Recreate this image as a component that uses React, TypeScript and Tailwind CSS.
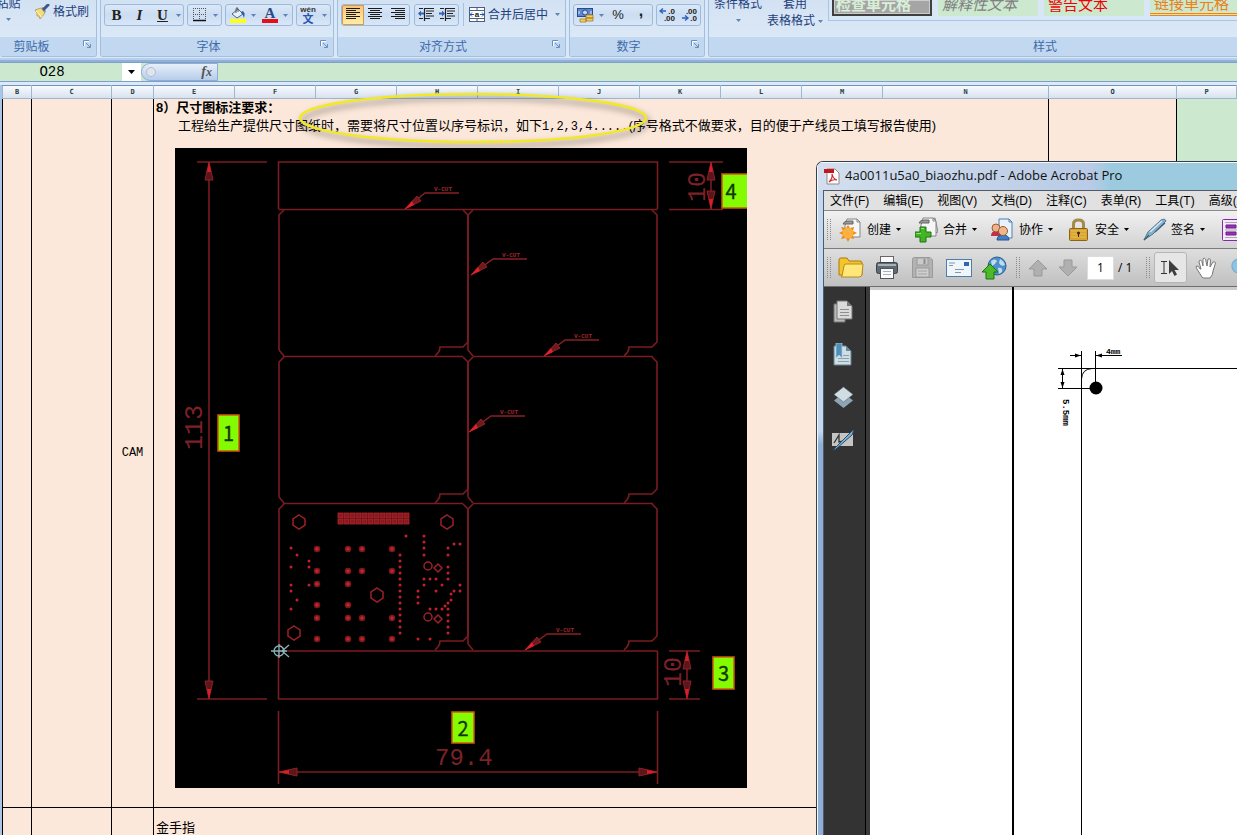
import React from "react";

const PANEL_ROWS = [208, 355, 502];
const PANEL_COLS = [
  { left: 279, right: 468 },
  { left: 468, right: 657 },
];

const V_CUTS = [
  { x: 405, y: 208, dx: 20 },
  { x: 471, y: 274, dx: 22 },
  { x: 544, y: 355, dx: 21 },
  { x: 469, y: 431, dx: 22 },
  { x: 525, y: 649, dx: 22 },
];

const PADS: [number, number[]][] = [
  [317, [548, 570, 583, 604, 617, 638]],
  [348, [548, 570, 583, 604, 617, 638]],
  [362, [548, 570, 617, 638]],
  [392, [548, 570, 617, 638]],
];

const VIAS: [number, number[]][] = [
  [291, [547, 566, 584, 590, 608]],
  [297, [554, 599]],
  [309, [560, 566, 584]],
  [400, [554, 560, 566, 572, 578, 584, 590, 596, 602, 608, 614, 620, 626, 632]],
  [406, [535]],
  [418, [590, 596, 602, 638]],
  [424, [535, 541, 547, 554, 578, 584]],
  [430, [578, 608, 638]],
  [436, [578, 590, 608]],
  [442, [584, 608]],
  [445, [605]],
  [448, [547, 554, 566, 572, 578, 602, 608, 614, 620, 626, 632]],
  [451, [593, 599]],
  [454, [543, 590]],
  [460, [543, 584, 590]],
];

const HOLES = [
  [299, 521],
  [447, 521],
  [377, 594],
  [294, 632],
];

const BADGES = [
  { n: "1", x: 218, y: 414, w: 21, h: 36 },
  { n: "2", x: 452, y: 711, w: 22, h: 31 },
  { n: "3", x: 713, y: 656, w: 21, h: 32 },
  { n: "4", x: 722, y: 173, w: 26, h: 34 },
];

const COLUMNS = [
  { name: "B", width: "w-[29px]" },
  { name: "C", width: "w-[80px]" },
  { name: "D", width: "w-[42px]" },
  { name: "E", width: "w-[81px]" },
  { name: "F", width: "w-[81px]" },
  { name: "G", width: "w-[81px]" },
  { name: "H", width: "w-[81px]" },
  { name: "I", width: "w-[81px]" },
  { name: "J", width: "w-[81px]" },
  { name: "K", width: "w-[81px]" },
  { name: "L", width: "w-[81px]" },
  { name: "M", width: "w-[81px]" },
  { name: "N", width: "w-[166px]" },
  { name: "O", width: "w-[128px]" },
  { name: "P", width: "w-auto" },
];

const MENUS = ["文件(F)", "编辑(E)", "视图(V)", "文档(D)", "注释(C)", "表单(R)", "工具(T)", "高级(A)"];

/* ---------- 通用小部件 ---------- */

function Caret({ className = "text-[#5f83b5]" }: { className?: string }) {
  return (
    <svg width="5" height="3" viewBox="0 0 5 3" className={`shrink-0 ${className}`}>
      <path d="M0 0H5L2.5 3Z" fill="currentColor" />
    </svg>
  );
}

function ToolBox({ children, className = "" }: { children: React.ReactNode; className?: string }) {
  return (
    <div className={`flex h-[22px] shrink-0 items-stretch rounded-[3px] border border-[#9cb9de] bg-linear-to-b from-[#dbe8f7] via-[#cbddf2] to-[#d9e6f6] ${className}`}>
      {children}
    </div>
  );
}

function Tool({ label, children, className = "w-[23px]" }: { label: string; children?: React.ReactNode; className?: string }) {
  return (
    <button aria-label={label} className={`flex items-center justify-center ${className}`}>
      {children}
    </button>
  );
}

function Group({ title, children, className, labelClass = "", launcher = true }: { title: string; children: React.ReactNode; className: string; labelClass?: string; launcher?: boolean }) {
  return (
    <section className={`flex flex-col overflow-hidden rounded-b-[3px] border-x border-b border-[#a3bfdf] ${className}`}>
      <div className="flex h-[37px] items-start bg-linear-to-b from-[#d3e2f3] to-[#dbe8f6]">{children}</div>
      <div className="flex h-[19px] items-center bg-[#c1d8f0] text-xs text-[#3e6aaa]">
        <span className={`flex-1 text-center ${labelClass}`}>{title}</span>
        {launcher && (
          <button aria-label={`${title}选项`} className="mr-[5px] mb-[5px] ml-1">
            <svg width="8" height="8" viewBox="0 0 8 8">
              <path d="M0.5 6V0.5H6" fill="none" stroke="#6c8ebf" />
              <path d="M3 3L7 7M7.5 4V7.5H4" fill="none" stroke="#6c8ebf" />
              <path d="M1.5 6V1.5H6" fill="none" stroke="#fff" />
            </svg>
          </button>
        )}
      </div>
    </section>
  );
}

function Lines({ rows, className = "" }: { rows: number[][]; className?: string }) {
  return (
    <svg width="16" height="13" viewBox="0 0 16 13" className={className}>
      {rows.map(([x, w], i) => (
        <rect key={i} x={x} y={i * 2} width={w} height="1" fill="#1b1b1b" />
      ))}
    </svg>
  );
}

/* ---------- Excel 功能区 ---------- */

function Ribbon() {
  return (
    <header className="flex h-[62px] shrink-0 gap-[3px] border-b-2 border-[#8fb0d9] bg-[#d9e7f8] pb-[3px] shadow-[inset_0_-2px_0_#b9d0ec]">
      <Group title="剪贴板" className="w-[97px] shrink-0 border-l-0" labelClass="pr-4">
        <button className="-mt-[4px] -ml-[4px] flex w-[25px] flex-col items-center gap-[6px] text-xs text-[#1e3f7d]">
          <span className="whitespace-nowrap">粘贴</span>
          <Caret />
        </button>
        <button className="mt-[4px] ml-[13px] flex items-center gap-[3px] text-xs text-[#1e3f7d]">
          <svg width="16" height="16" viewBox="0 0 16 16">
            <path d="M1 6L7 4L11 9L6 15L5 12L3 12L3 9Z" fill="#f4dc7c" stroke="#b08a34" strokeWidth="0.7" />
            <path d="M3 8L8 13M2 7L6 11" stroke="#fff5bf" />
            <path d="M7 4L11 9L12 7L9 3Z" fill="#8a93a8" />
            <path d="M10 5L14 1" stroke="#3e5788" strokeWidth="3" strokeLinecap="round" />
          </svg>
          格式刷
        </button>
      </Group>

      <Group title="字体" className="w-[234px] shrink-0">
        <div className="mt-[4px] ml-[3px] flex gap-[3px] font-['Liberation_Serif',serif] text-[15px] font-bold text-[#222]">
          <ToolBox className="w-[80px]">
            <Tool label="加粗">B</Tool>
            <Tool label="倾斜"><i>I</i></Tool>
            <Tool label="下划线"><u>U</u></Tool>
            <Tool label="下划线类型" className="w-[9px]"><Caret /></Tool>
          </ToolBox>
          <ToolBox className="w-[35px]">
            <Tool label="边框">
              <svg width="14" height="14" viewBox="0 0 14 14">
                <path d="M0.5 0V12M6.5 0V12M12.5 0V12M0 0.5H13M0 6.5H13" stroke="#555" strokeDasharray="1 1" />
                <path d="M0 12.5H13" stroke="#111" strokeWidth="1.5" />
              </svg>
            </Tool>
            <Tool label="边框类型" className="w-[9px]"><Caret /></Tool>
          </ToolBox>
          <ToolBox className="w-[68px]">
            <Tool label="填充颜色">
              <svg width="16" height="16" viewBox="0 0 16 16">
                <path d="M2 7L8 2L13 7L7 11Z" fill="#e9f0fa" stroke="#48658f" />
                <path d="M6 6V2Q7 -1 8 2V5" fill="none" stroke="#555" />
                <path d="M12 4Q16 5 14 11Q13 7 11 6Z" fill="#2e5cab" />
                <rect y="12" width="16" height="4" fill="#ffff14" />
              </svg>
            </Tool>
            <Tool label="更多填充" className="w-[9px]"><Caret /></Tool>
            <Tool label="字体颜色">
              <svg width="16" height="16" viewBox="0 0 16 16" className="overflow-visible">
                <text x="8" y="11" textAnchor="middle" fontSize="15" fontWeight="bold" fill="#2b4a86">A</text>
                <rect y="12" width="16" height="4" fill="#e3101a" />
              </svg>
            </Tool>
            <Tool label="更多字体颜色" className="w-[9px]"><Caret /></Tool>
          </ToolBox>
          <ToolBox className="w-[35px]">
            <Tool label="拼音指南">
              <svg width="17" height="18" viewBox="0 0 17 18" className="overflow-visible" fontFamily="'Liberation Sans','Noto Sans CJK SC',sans-serif">
                <text x="8" y="6" textAnchor="middle" fontSize="8" fontWeight="bold" fill="#333">wén</text>
                <text x="8" y="17" textAnchor="middle" fontSize="11" fontWeight="bold" fill="#2a55b0">文</text>
              </svg>
            </Tool>
            <Tool label="拼音选项" className="w-[9px]"><Caret /></Tool>
          </ToolBox>
        </div>
      </Group>

      <Group title="对齐方式" className="w-[229px] shrink-0">
        <div className="mt-[3px] ml-[3px] flex items-center gap-[4px]">
          <ToolBox className="w-[69px]">
            <button aria-label="左对齐" className="flex w-[23px] items-center justify-center rounded-l-[2px] bg-linear-to-b from-[#f9c07a] via-[#fddb92] to-[#ffeea2] shadow-[inset_0_0_0_1px_#d39a52]">
              <Lines rows={[[1, 14], [1, 10], [1, 14], [1, 10], [1, 14], [1, 10]]} />
            </button>
            <Tool label="居中"><Lines rows={[[1, 14], [3, 10], [1, 14], [3, 10], [1, 14], [3, 10]]} /></Tool>
            <Tool label="右对齐"><Lines rows={[[1, 14], [5, 10], [1, 14], [5, 10], [1, 14], [5, 10]]} /></Tool>
          </ToolBox>
          <ToolBox className="w-[45px]">
            {["减少缩进量", "增加缩进量"].map((label, i) => (
              <Tool key={label} label={label} className="w-[22px]">
                <svg width="16" height="13" viewBox="0 0 16 13">
                  <path d="M1 0.5H5M7 0.5H16M8 3H16M8 5.5H14M8 8H16M7 10.5H12M1 10.5H5M6.5 0V13" stroke="#222" strokeWidth="1.2" />
                  <path d={i === 0 ? "M0 5.5L3 2.5V4.5H6V6.5H3V8.5Z" : "M6 5.5L3 2.5V4.5H0V6.5H3V8.5Z"} fill="#2f62b8" />
                </svg>
              </Tool>
            ))}
          </ToolBox>
          <div className="h-[23px] w-px bg-[#a9c2e0]" />
          <button className="ml-px flex items-center gap-[3px] text-xs text-[#1e3f7d]">
            <svg width="16" height="15" viewBox="0 0 16 15">
              <rect x="0.5" y="0.5" width="15" height="14" fill="#fff" stroke="#4b5f80" />
              <path d="M0 3.5H16M0 11.5H16M8 0V3M8 12V15" stroke="#4b5f80" />
              <path d="M1 7.5H5M3 5.5L1 7.5L3 9.5M15 7.5H11M13 5.5L15 7.5L13 9.5" fill="none" stroke="#2352a5" />
              <text x="8" y="10" textAnchor="middle" fontSize="8" fontWeight="bold" fill="#222">a</text>
            </svg>
            合并后居中
            <Caret className="ml-[4px] text-[#5f83b5]" />
          </button>
        </div>
      </Group>

      <Group title="数字" className="w-[136px] shrink-0">
        <div className="mt-[4px] ml-[3px] flex gap-[3px] text-[13px] text-[#222]">
          <ToolBox className="w-[80px]">
            <Tool label="会计数字格式">
              <svg width="17" height="17" viewBox="0 0 17 17">
                <rect x="0.5" y="1.5" width="15" height="8" fill="#5d86cd" stroke="#27498e" />
                <circle cx="8" cy="5.5" r="2.5" fill="#c4d8f6" stroke="#27498e" />
                <path d="M2 4V7M14 4V7" stroke="#dbe8fb" />
                <path d="M9 8H16V11H9ZM9 11H16V14H9ZM3 12H9V15H3Z" fill="#f6cf5b" stroke="#9c711c" strokeWidth="0.7" />
              </svg>
            </Tool>
            <Tool label="货币选项" className="w-[9px]"><Caret /></Tool>
            <Tool label="百分比样式" className="w-[24px]">%</Tool>
            <Tool label="千位分隔样式" className="w-[22px]"><b className="-mt-2 text-base">,</b></Tool>
          </ToolBox>
          <ToolBox className="w-[45px]">
            {["增加小数位数", "减少小数位数"].map((label, i) => (
              <Tool key={label} label={label} className="w-[22px]">
                <svg width="17" height="16" viewBox="0 0 17 16" fontSize="8" fontWeight="bold" fill="#222">
                  <text x="16" y="7" textAnchor="end">{i === 0 ? ".0" : ".00"}</text>
                  <text x="16" y="14" textAnchor="end">{i === 0 ? ".00" : ".0"}</text>
                  <path d={i === 0 ? "M1 4H7M4 1.5L1 4L4 6.5" : "M1 11H7M4 8.5L7 11L4 13.5"} fill="none" stroke="#2f62b8" strokeWidth="1.4" />
                </svg>
              </Tool>
            ))}
          </ToolBox>
        </div>
      </Group>

      <Group title="样式" className="min-w-0 flex-1 rounded-br-none border-r-0" labelClass="pl-36" launcher={false}>
        <div className="flex w-full min-w-0 whitespace-nowrap text-[#1e3f7d]">
          <button className="-mt-[4px] ml-[5px] flex w-12 shrink-0 flex-col items-center gap-[7px] text-xs">
            条件格式
            <Caret />
          </button>
          <button className="-mt-[4px] ml-[5px] flex w-[56px] shrink-0 flex-col text-xs leading-[17px]">
            <span>套用</span>
            <span className="flex items-center gap-[3px]">
              表格格式
              <Caret />
            </span>
          </button>
          <div className="ml-[5px] flex h-[21px] min-w-0 flex-1 gap-[6px] overflow-hidden border-b border-l border-[#a9c4e4] bg-[#d9e6f5] pl-[3px] text-[15px] leading-[18px]">
            <button className="h-[16px] w-[100px] shrink-0 overflow-hidden border-2 border-t-0 border-[#3f3f3f] bg-[#a5a5a5] text-left text-[#d8f0d8] shadow-[inset_0_0_0_1px_#ccc]"><div className="-mt-[5px] pl-[2px] font-bold">检查单元格</div></button>
            <button className="h-[16px] w-[100px] shrink-0 overflow-hidden bg-[#cce8cf] text-left text-[#7f7f7f] italic"><div className="-mt-[6px] pl-[4px]">解释性文本</div></button>
            <button className="h-[16px] w-[100px] shrink-0 overflow-hidden bg-[#cce8cf] text-left text-[#f00000]"><div className="-mt-[6px] pl-[4px]">警告文本</div></button>
            <button className="h-[16px] w-[100px] shrink-0 overflow-hidden border-b-3 border-double border-[#ff8001] bg-[#cce8cf] text-left text-[#e8811a]"><div className="-mt-[6px] pl-[4px]">链接单元格</div></button>
          </div>
        </div>
      </Group>
    </header>
  );
}

function FormulaBar() {
  return (
    <div className="flex h-[20px] shrink-0 border-y border-[#7f9fc8] bg-[#cce8cf]">
      <input aria-label="名称框" defaultValue="O28" className="w-[122px] shrink-0 bg-[#cce8cf] pr-[18px] text-center font-['Liberation_Mono',monospace] text-sm text-black outline-none" />
      <button aria-label="名称列表" className="flex w-[19px] shrink-0 items-center justify-center bg-white">
        <svg width="7" height="4" viewBox="0 0 7 4"><path d="M0 0H7L3.5 4Z" /></svg>
      </button>
      <div className="flex w-[77px] shrink-0 items-center justify-between rounded-l-full border-y border-r border-l border-[#8fadd3] bg-linear-to-b from-[#e6eff9] to-[#b6cdea] pr-[5px] pl-[4px]">
        <span className="size-[10px] rounded-full border border-[#b3bdcb] bg-[#dfe5ee]" />
        <button aria-label="插入函数" className="font-['Liberation_Serif',serif] text-sm leading-none font-bold text-[#555] italic">
          f<span className="text-xs">x</span>
        </button>
      </div>
      <input aria-label="编辑栏" className="min-w-0 flex-1 bg-[#cce8cf] outline-none" />
    </div>
  );
}

/* ---------- 拼板尺寸图 ---------- */

function Arrow({ x, y, turn }: { x: number; y: number; turn: number }) {
  return (
    <g transform={`translate(${x} ${y}) rotate(${turn})`}>
      <path d="M0 0L-4 18H4Z" fill="#5b161b" stroke="#8f2026" strokeWidth="1" />
      <path d="M0 0L-2 10H2Z" fill="#d81f28" />
    </g>
  );
}

function PanelDrawing() {
  return (
    <svg viewBox="175 147 572 640" className="block h-[640px] w-[572px] bg-black" role="img" aria-label="拼板尺寸图">
      <g fill="none" stroke="#7a1c22" strokeWidth="1.6">
        <path d="M278.5 208V161H657.5V208M278.5 650V698H657.5V650" />
        <path d="M278.5 208.5H657.5M283 355.5H463M473 355.5H653M283 502.5H463M473 502.5H653M278.5 650H657.5" />
        {PANEL_ROWS.map((top) =>
          PANEL_COLS.map(({ left, right }) => (
            <path
              key={`${top}-${left}`}
              d={`M${left} ${top + 141}V${top + 6}L${left + 5} ${top + 1}M${right - 5} ${top + 1}L${right} ${top + 6}V${top + 133}L${right - 5} ${top + 138}H${right - 28}Q${right - 28} ${top + 143} ${right - 33} ${top + 147}M${left} ${top + 141}L${left + 5} ${top + 147}`}
            />
          ))
        )}
        {/* 尺寸界线 */}
        <path d="M197 161H267M197 698H267M209 161V698" />
        <path d="M278.5 710V783M657.5 710V783M279 771H657" />
        <path d="M669 161H723M669 208.5H723M711 161V208" />
        <path d="M669 650H700M669 698H700M687 650V698" />
      </g>

      <Arrow x={209} y={161} turn={0} />
      <Arrow x={209} y={698} turn={180} />
      <Arrow x={711} y={161} turn={0} />
      <Arrow x={711} y={208} turn={180} />
      <Arrow x={687} y={650} turn={0} />
      <Arrow x={687} y={698} turn={180} />
      <Arrow x={279} y={771} turn={-90} />
      <Arrow x={657} y={771} turn={90} />

      {V_CUTS.map(({ x, y, dx }) => (
        <g key={`${x}-${y}`}>
          <path d={`M${x} ${y}L${x + dx} ${y - 16}H${x + dx + 34}`} fill="none" stroke="#8a2026" strokeWidth="1.4" />
          <path d={`M${x} ${y}L${x + 12} ${y - 13}L${x + 16} ${y - 8}Z`} fill="#6d191e" stroke="#a3242b" strokeWidth="0.8" />
          <path d={`M${x} ${y}L${x + 7} ${y - 8}L${x + 9} ${y - 4}Z`} fill="#e0222b" />
          <text x={x + dx + 9} y={y - 18} fontSize="6" fontWeight="bold" fill="#a0282e" fontFamily="'Liberation Mono',monospace">V-CUT</text>
        </g>
      ))}

      {/* 元件孔位 */}
      {Array.from({ length: 24 }, (_, i) => (
        <rect key={i} x={338 + (i % 12) * 6} y={i < 12 ? 512 : 518} width="5" height="5" fill="#8a1a20" stroke="#b3262d" strokeWidth="0.8" />
      ))}
      {PADS.map(([x, ys]) => ys.map((y) => <circle key={`${x}-${y}`} cx={x} cy={y} r="2.5" fill="#c7232b" stroke="#78181d" strokeWidth="1.5" />))}
      {VIAS.map(([x, ys]) => ys.map((y) => <circle key={`${x}-${y}`} cx={x} cy={y} r="1.5" fill="#c4202a" />))}
      <g fill="none" stroke="#9a2228" strokeWidth="1.5">
        {HOLES.map(([x, y]) => (
          <path key={`${x}-${y}`} d={`M${x} ${y - 7}L${x + 6} ${y - 3}V${y + 3}L${x} ${y + 7}L${x - 6} ${y + 3}V${y - 3}Z`} />
        ))}
        <circle cx="428" cy="565" r="4" />
        <circle cx="428" cy="616" r="4" />
        <path d="M438 563L442 567L438 571L434 567ZM438 614L442 618L438 622L434 618Z" />
      </g>

      {/* 原点 */}
      <g fill="none" stroke="#87b5b8" strokeWidth="1.3">
        <circle cx="279" cy="650" r="5" />
        <path d="M271 650H287M279 643V657M282 650L289 644M282 650L289 656" />
      </g>

      <g fill="#7d2127" fontFamily="'Liberation Mono',monospace" fontSize="25">
        <text transform="translate(202 449) rotate(-90)">113</text>
        <text x="435" y="764" fontSize="24">79.4</text>
        <text transform="translate(705 201) rotate(-90)">10</text>
        <text transform="translate(681 686) rotate(-90)">10</text>
      </g>

      {BADGES.map(({ n, x, y, w, h }) => (
        <g key={n}>
          <rect x={x} y={y} width={w} height={h} fill="#84fb00" stroke="#d05a10" strokeWidth="1.5" />
          <text x={n === "4" ? 731 : x + w / 2} y={y + h / 2 + 8} textAnchor="middle" fontSize="20" fill="#12350a" stroke="#12350a" strokeWidth="0.3" fontFamily="'Noto Sans CJK SC',sans-serif">{n}</text>
        </g>
      ))}
    </svg>
  );
}

function Sheet() {
  return (
    <div className="min-h-0 flex-1 overflow-hidden border-l-2 border-[#a9c6e8] bg-[#fce8da]">
      <table className="w-full table-fixed border-collapse text-[13px] text-black">
        <colgroup>
          {COLUMNS.map(({ name, width }) => <col key={name} className={width} />)}
        </colgroup>
        <thead>
          <tr className="h-[13px] bg-linear-to-b from-[#f8fafd] to-[#d5e0ee] font-['DejaVu_Sans_Mono',monospace] text-[7px] leading-[12px]">
            {COLUMNS.map(({ name }) => (
              <th key={name} scope="col" className="border border-t-[#6f93c1] border-r-[#9eb6ce] border-b-[#9eb6ce] border-l-[#9eb6ce] p-0 font-bold text-[#27413e]">{name}</th>
            ))}
          </tr>
        </thead>
        <tbody>
          <tr>
            <td className="border-x border-b border-black" />
            <td className="border-x border-b border-black" />
            <td className="border-x border-b border-black p-0 text-center font-['Liberation_Mono',monospace] text-xs">CAM</td>
            <td colSpan={10} className="relative border-x border-b border-black p-0 align-top">
              <p className="pl-[2px] leading-[18px] font-bold">8）尺寸图标注要求：</p>
              <p className="pl-6 leading-[17px] whitespace-nowrap">
                工程给生产提供尺寸图纸时，需要将尺寸位置以序号标识，如下
                <span className="font-['Liberation_Mono',monospace] text-xs">1,2,3,4.....</span>
                (序号格式不做要求，目的便于产线员工填写报告使用)
              </p>
              <div className="mt-[13px] mb-[19px] ml-[21px]">
                <PanelDrawing />
              </div>
              <svg className="pointer-events-none absolute -top-2 left-[144px] drop-shadow-[2px_4px_3px_rgba(0,0,0,0.5)]" width="352" height="54" viewBox="0 0 352 54">
                <ellipse cx="175" cy="27" rx="173" ry="24" fill="none" stroke="#f2e926" strokeWidth="2.5" />
              </svg>
            </td>
            <td className="border-x border-b border-black" />
            <td className="border-l border-black bg-[#cce8cf]" />
          </tr>
          <tr className="h-10">
            <td className="border-x border-black" />
            <td className="border-x border-black" />
            <td className="border-x border-black" />
            <td colSpan={10} className="border-x border-black px-[2px] py-0">金手指</td>
            <td className="border-x border-black" />
            <td className="bg-[#cce8cf]" />
          </tr>
        </tbody>
      </table>
    </div>
  );
}

/* ---------- Acrobat 窗口 ---------- */

function PageShape() {
  return (
    <>
      <path d="M8 1H18L21 4V19H6V8Z" fill="#f6f6f6" stroke="#858585" />
      <path d="M18 1V4H21" fill="none" stroke="#858585" />
      <path d="M4 6Q5 3 9 3H14V6H4Z" fill="#9a9a9a" stroke="#666" />
    </>
  );
}

function CreateIcon() {
  return (
    <svg width="23" height="24" viewBox="0 0 23 24">
      <PageShape />
      <path d="M9 7L11 10L15 9L14 13L18 15L14 17L15 21L11 20L9 24L7 20L2 21L4 17L0 15L4 13L2 9L7 10Z" fill="#e78b1c" />
      <circle cx="9" cy="15" r="5.5" fill="#fcb040" />
    </svg>
  );
}

function MergeIcon() {
  return (
    <svg width="23" height="26" viewBox="0 0 23 26">
      <path d="M6 4L20 1L23 15L12 19Z" fill="#dedede" stroke="#888" />
      <PageShape />
      <path d="M5 10H11V15H16V20H11V25H5V20H0V15H5Z" fill="#43b525" stroke="#1c7410" />
      <path d="M6 11.5H9M1.5 16.5H6" stroke="#9be37f" />
    </svg>
  );
}

function ShareIcon() {
  return (
    <svg width="22" height="24" viewBox="0 0 22 24">
      <path d="M8 1H18L21 4V20H8Z" fill="#eaf3fc" stroke="#4e7fb2" />
      <path d="M18 1V4H21" fill="none" stroke="#4e7fb2" />
      <path d="M0 18Q0 13 5 13Q10 13 10 18Z" fill="#c22f4e" />
      <circle cx="5" cy="10" r="4" fill="#eab487" stroke="#9a5a35" />
      <path d="M6 22Q6 17 12 17Q18 17 18 22Z" fill="#3e7fc4" stroke="#24558e" />
      <circle cx="12" cy="13" r="4.5" fill="#edb78b" stroke="#9a5a35" />
    </svg>
  );
}

function LockIcon() {
  return (
    <svg width="19" height="23" viewBox="0 0 19 23" className="ml-[2px]">
      <path d="M4.5 11V6Q4.5 2 9.5 2Q14.5 2 14.5 6V11" fill="none" stroke="#a58a4a" strokeWidth="3" />
      <rect x="0.5" y="10.5" width="18" height="12" rx="1" fill="#d9a32f" stroke="#8a6416" />
      <path d="M2 13H17M2 16H17M2 19H17" stroke="#edc767" strokeWidth="0.8" />
      <circle cx="9.5" cy="15" r="1.5" fill="#3b2a08" />
      <path d="M9.5 15V19" stroke="#3b2a08" />
    </svg>
  );
}

function PenIcon() {
  return (
    <svg width="24" height="24" viewBox="0 0 24 24">
      <path d="M1 22L5 14L18 2Q22 0 23 3L10 16Z" fill="#83afcb" stroke="#54788f" />
      <path d="M7 14L19 3" stroke="#d4e8f5" strokeWidth="1.5" />
      <path d="M12 14L22 5M1 22L6 17" stroke="#425f73" strokeWidth="1.2" />
    </svg>
  );
}

const TASKS = [
  { name: "创建", icon: <CreateIcon /> },
  { name: "合并", icon: <MergeIcon /> },
  { name: "协作", icon: <ShareIcon /> },
  { name: "安全", icon: <LockIcon /> },
  { name: "签名", icon: <PenIcon /> },
];

function Grip() {
  return (
    <svg width="4" height="22" viewBox="0 0 4 22" className="shrink-0">
      <path d="M0.5 0V22M3.5 0V22" stroke="#8b8b8b" strokeDasharray="1 1" />
    </svg>
  );
}

function TaskBar() {
  return (
    <div className="flex h-[38px] shrink-0 items-center overflow-hidden border-b border-[#7b7b7b] bg-linear-to-b from-[#f1f1f1] to-[#d2d2d2] pl-[3px]">
      <Grip />
      <div className="ml-2 flex">
        {TASKS.map(({ name, icon }) => (
          <button key={name} className="flex w-[76px] shrink-0 items-center text-xs text-black">
            <span className="flex w-[28px] shrink-0 justify-start">{icon}</span>
            {name}
            <Caret className="ml-[5px] text-black" />
          </button>
        ))}
        <button aria-label="表单" className="flex shrink-0 items-center pl-[3px]">
          <svg width="24" height="22" viewBox="0 0 24 22">
            <rect x="0.5" y="0.5" width="23" height="21" rx="1" fill="#f4e8fa" stroke="#8428a3" />
            <path d="M3 3.5H22M3 11H22M3 18.5H22" stroke="#aaa" />
            <path d="M4 6H14V9H4ZM4 13H14V16H4Z" fill="#9337b3" stroke="#6d1b8c" />
          </svg>
        </button>
      </div>
    </div>
  );
}

function ViewBar() {
  return (
    <div className="flex h-[38px] shrink-0 items-center overflow-hidden border-b border-[#6e6e6e] bg-linear-to-b from-[#dedede] to-[#c0c0c0] pl-[3px]">
      <Grip />
      <button aria-label="打开" className="ml-[7px] shrink-0">
        <svg width="26" height="21" viewBox="0 0 26 21">
          <path d="M1 18V3Q1 1 3 1H9L11 4H22Q24 4 24 6V18Z" fill="#f3c52c" stroke="#a97b0c" />
          <path d="M4 19L6 9Q6 7 8 7H25L24 17Q24 20 21 20H3Z" fill="#ffe77a" stroke="#b98c17" />
        </svg>
      </button>
      <button aria-label="打印" className="ml-[12px] shrink-0">
        <svg width="22" height="23" viewBox="0 0 22 23">
          <rect x="4.5" y="0.5" width="13" height="7" fill="#fafafa" stroke="#666" />
          <rect x="0.5" y="6.5" width="21" height="11" rx="2" fill="#606a72" stroke="#3c4449" />
          <path d="M2 9H20" stroke="#a6b2ba" strokeWidth="2" />
          <rect x="4.5" y="12.5" width="13" height="10" fill="#fafafa" stroke="#555" />
          <path d="M7 15.5H15M7 18.5H15" stroke="#9bb5cc" />
        </svg>
      </button>
      <button aria-label="保存" disabled className="ml-[14px] shrink-0">
        <svg width="21" height="21" viewBox="0 0 21 21">
          <path d="M0.5 2.5Q0.5 0.5 2.5 0.5H18L20.5 3V20.5H0.5Z" fill="#b2b2b2" stroke="#9a9a9a" />
          <rect x="5" y="1" width="11" height="7" fill="#cacaca" stroke="#9a9a9a" />
          <path d="M12.5 2V7" stroke="#8e8e8e" strokeWidth="2" />
          <rect x="4" y="11" width="13" height="9" fill="#cfcfcf" stroke="#9a9a9a" />
          <path d="M6 14H15M6 17H15" stroke="#a3a3a3" />
        </svg>
      </button>
      <button aria-label="电子邮件" className="ml-[13px] shrink-0">
        <svg width="26" height="18" viewBox="0 0 26 18">
          <rect x="0.5" y="0.5" width="25" height="17" fill="#eff6fb" stroke="#4b7eac" />
          <rect x="18" y="3" width="5" height="4" fill="#2f68aa" />
          <path d="M3 4H9M3 6.5H7M9 10.5H18M9 13.5H15" stroke="#8398aa" />
        </svg>
      </button>
      <button aria-label="上传" className="ml-[10px] shrink-0">
        <svg width="25" height="24" viewBox="0 0 25 24">
          <circle cx="15" cy="10" r="9" fill="#4f8fca" stroke="#2a5f94" />
          <path d="M9 5Q13 2 15 5Q13 9 10 10ZM18 3Q22 5 23 9Q19 11 17 7ZM16 12Q21 11 20 16L17 18Z" fill="#bfdcf0" />
          <path d="M8 8L16 16H12V23H4V16H0Z" fill="#4cba28" stroke="#1c7410" />
        </svg>
      </button>
      <span className="ml-[9px] flex"><Grip /></span>
      {["上一页", "下一页"].map((label, i) => (
        <button key={label} aria-label={label} disabled className={i === 0 ? "ml-[8px] shrink-0" : "ml-[10px] shrink-0"}>
          <svg width="20" height="18" viewBox="0 0 20 18">
            <path d={i === 0 ? "M10 1L19 10H14V17H6V10H1Z" : "M10 17L19 8H14V1H6V8H1Z"} fill="#b0b0b0" stroke="#999" />
          </svg>
        </button>
      ))}
      <label className="ml-[9px] flex shrink-0 items-center gap-[4px] font-['Open_Sans',sans-serif] text-xs text-black">
        <input aria-label="页码" defaultValue="1" className="h-6 w-[27px] border border-[#ddd] bg-white text-center outline-none" />
        / 1
      </label>
      <span className="ml-[14px] flex"><Grip /></span>
      <button aria-label="选择工具" className="ml-[4px] flex h-[31px] w-[33px] shrink-0 items-center justify-center rounded-[3px] border border-[#b5b5b5] bg-[#e6e6e6]">
        <svg width="19" height="17" viewBox="0 0 19 17">
          <path d="M0 2.5H6M0 14.5H6M3 2.5V14.5" stroke="#333" />
          <path d="M8 1V15L11 12L13.5 17L16 15.5L13.5 11H18Z" fill="#3d3d3d" />
        </svg>
      </button>
      <button aria-label="手形工具" className="ml-[8px] shrink-0">
        <svg width="22" height="22" viewBox="0 0 22 22">
          <path d="M7 20L2 12Q0 9 2 9Q4 9 5 12L6 12L4 5Q4 3 5.5 3Q7 3 8 9L8 2Q9 0 10.5 2L12 9L13 2Q15 1 15.5 3L15 10L18 5Q20 4 20.5 6L18 14Q18 18 15 21H8Z" fill="#fff" stroke="#777" />
        </svg>
      </button>
      <button aria-label="放大" className="ml-[14px] shrink-0">
        <svg width="16" height="20" viewBox="0 0 16 20"><circle cx="8" cy="8" r="7" fill="#8cc4e6" stroke="#7fb0d0" strokeWidth="1.5" /></svg>
      </button>
    </div>
  );
}

function NavPane() {
  return (
    <nav className="flex w-[41px] shrink-0 flex-col items-center gap-[20px] bg-[#333] pt-[13px] pr-[3px]">
      <button aria-label="页面">
        <svg width="20" height="23" viewBox="0 0 20 23">
          <path d="M1 4H12V22H1Z" fill="#b9b9b9" stroke="#777" />
          <path d="M4 1H14L19 6V19H4Z" fill="#dadada" stroke="#777" />
          <path d="M14 1V6H19Z" fill="#777" />
          <path d="M7 9.5H16M7 12.5H16M7 15.5H16" stroke="#8e8e8e" />
        </svg>
      </button>
      <button aria-label="书签">
        <svg width="20" height="23" viewBox="0 0 20 23">
          <path d="M1 3H13L18 8V22H1Z" fill="#cfdde4" stroke="#67808e" />
          <path d="M13 3V8H18Z" fill="#6b8798" />
          <path d="M10 12.5H16M5 15.5H16M5 18.5H16" stroke="#8ba1ad" />
          <path d="M3 0H9V15L6 12L3 15Z" fill="#4f8fb5" stroke="#a7cfe6" strokeWidth="0.7" />
        </svg>
      </button>
      <button aria-label="图层">
        <svg width="21" height="23" viewBox="0 0 21 23">
          <path d="M10.5 7L20 14.5L10.5 22L1 14.5Z" fill="#8fa5b3" />
          <path d="M10.5 1L20 8.5L10.5 16L1 8.5Z" fill="#d2dde3" stroke="#5d6f7a" strokeWidth="0.6" />
        </svg>
      </button>
      <button aria-label="签名">
        <svg width="24" height="22" viewBox="0 0 24 22">
          <rect x="1" y="4" width="21" height="13" fill="#c4c4c4" />
          <path d="M3 14L8 6L8 13L13 12" fill="none" stroke="#333" strokeWidth="1.3" />
          <path d="M2 21L21 2L23 1L21 6L5 20Z" fill="#7cb0d2" stroke="#2b4f66" />
        </svg>
      </button>
    </nav>
  );
}

function PdfPage() {
  return (
    <svg className="min-w-0 flex-1 bg-white" height="100%" role="img" aria-label="4a0011u5a0_biaozhu" fontFamily="'Liberation Mono',monospace" fontSize="9" fontWeight="bold">
      <rect width="100%" height="3" fill="#ccc" />
      <line x1="143" x2="143" y1="0" y2="100%" stroke="#000" strokeWidth="2" />
      <g stroke="#000" fill="none">
        <line x1="188" x2="100%" y1="81.5" y2="81.5" />
        <line x1="211.5" x2="211.5" y1="91" y2="100%" />
        <path d="M211.5 64V92Q212 82 222 81.5M225.5 64V101M188 101.5H226M192.5 82V101M200 68.5H211M226 68.5H252" />
      </g>
      <path d="M211 68.5L205 66.5V70.5ZM226 68.5L232 66.5V70.5ZM192.5 82L190.5 88H194.5ZM192.5 101L190.5 95H194.5Z" />
      <circle cx="226" cy="101" r="6.5" />
      <text x="236" y="67" fontSize="8">4mm</text>
      <text transform="translate(193 112) rotate(90)">5.5mm</text>
    </svg>
  );
}

function AcrobatWindow() {
  return (
    <section className="absolute top-[161px] right-0 bottom-0 left-[816px] flex flex-col overflow-hidden rounded-tl-[7px] border-t border-l border-[#34404d] bg-linear-to-b from-[#c3d7ee] from-40% to-[#8fb0d3] to-42% pl-[6px] shadow-[inset_1px_1px_0_#f3f8fd]">
      <div className="-ml-[6px] flex h-[28px] shrink-0 items-center gap-[5px] bg-linear-to-r from-[#d3dfee] via-[#b9cbe6] via-65% to-[#9ccbe0] to-70% pl-[7px] shadow-[inset_1px_1px_0_#f3f8fd]">
        <svg width="16" height="17" viewBox="0 0 16 17">
          <path d="M3 1H11L15 5V16H3Z" fill="#fff" stroke="#8a8a8a" />
          <rect y="1" width="10" height="4" fill="#c4161c" />
          <path d="M5 14Q9 10 8 6Q9 11 13 12Q8 11 5 14Z" fill="none" stroke="#d8232a" strokeWidth="1.2" />
        </svg>
        <h1 className="font-['Open_Sans',sans-serif] text-[13px] whitespace-nowrap text-[#111]">4a0011u5a0_biaozhu.pdf - Adobe Acrobat Pro</h1>
      </div>
      <div className="flex min-h-0 flex-1 flex-col border-t border-l border-[#4f5b68] bg-[#d8d8d8]">
        <div className="flex h-[20px] shrink-0 items-center gap-[14px] overflow-hidden border-b border-[#8b8b8b] bg-[#e1e1e1] pl-[6px] text-xs whitespace-nowrap text-black">
          {MENUS.map((menu) => <button key={menu} className="shrink-0">{menu}</button>)}
        </div>
        <TaskBar />
        <ViewBar />
        <div className="flex min-h-0 flex-1">
          <NavPane />
          <div className="w-[5px] shrink-0 border-l border-black bg-[#3a3a3a]" />
          <PdfPage />
        </div>
      </div>
    </section>
  );
}

export default function App() {
  return (
    <main className="relative flex h-screen flex-col overflow-hidden bg-[#dce9f8] font-['Liberation_Sans','Noto_Sans_CJK_SC',sans-serif]">
      <Ribbon />
      <FormulaBar />
      <div className="h-[3px] shrink-0 bg-[#dce9f8]" />
      <Sheet />
      <AcrobatWindow />
    </main>
  );
}
